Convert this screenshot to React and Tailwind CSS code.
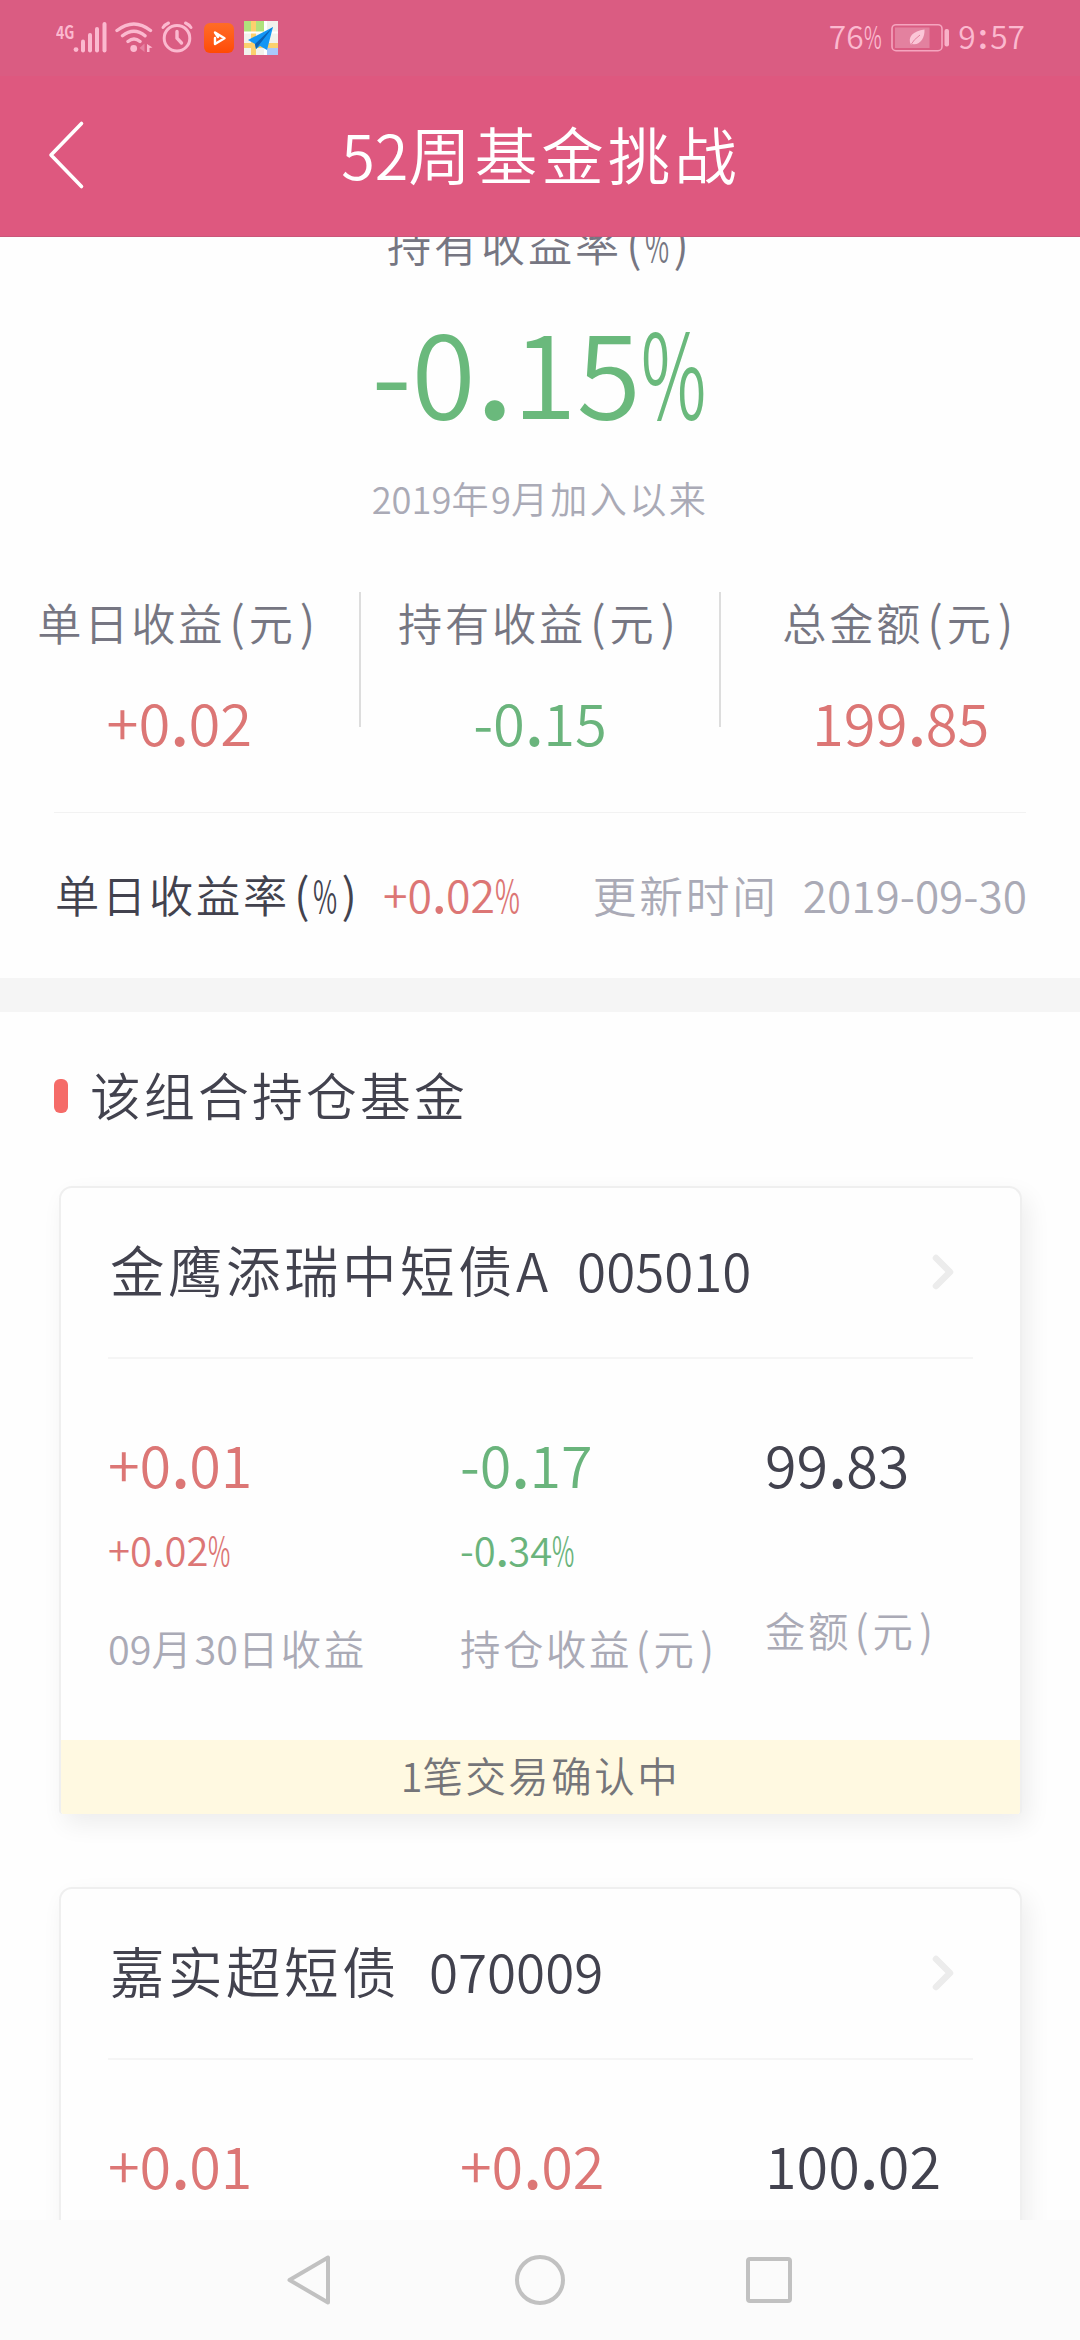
import React from 'react';

const RUN = /[\u4e00-\u9fff]+|[()]|%|\.|:|[^\u4e00-\u9fff()%.:]+/g;

function T({ children, className = '' }) {
  return (
    <div className={`whitespace-nowrap ${className}`}>
      {children.match(RUN).map((run, i) => {
        if (/[\u4e00-\u9fff]/.test(run))
          return <span key={i} className="text-[0.94em] leading-none tracking-[0.0638em]">{run}</span>;
        if (run === '%')
          return (
            <span key={i} className="inline-block w-[0.51em] leading-none">
              <span className="inline-block origin-left scale-x-[0.61] text-[0.92em] leading-none">%</span>
            </span>
          );
        if (run === '(' || run === ')')
          return <span key={i} className="inline-block w-[0.5em] text-center leading-none">{run}</span>;
        if (run === '.')
          return <span key={i} className="inline-block w-[0.29em] text-center font-medium leading-none">.</span>;
        if (run === ':')
          return <span key={i} className="inline-block w-[0.42em] text-center leading-none">:</span>;
        return <span key={i} className="text-[0.92em] font-[350] leading-none">{run}</span>;
      })}
    </div>
  );
}

function StatusBar() {
  return (
    <div className="flex h-[76px] items-start justify-between bg-[#da5c82] pl-[56px] pr-[55px] text-[#fbb9cf]">
      <div className="flex items-start">
        <div className="w-[17px] pt-[20px]">
          <span className="inline-block origin-left scale-x-[0.78] text-[18px] font-bold leading-[18px]">4G</span>
        </div>
        <svg className="mt-[20px] h-[34px] w-[36px]" viewBox="73 20 36 34" fill="currentColor">
          <circle cx="76" cy="49.6" r="2.4" />
          <rect x="81" y="39.5" width="4" height="13" rx="2" />
          <rect x="88" y="33" width="4" height="19.5" rx="2" />
          <rect x="95" y="27" width="4" height="25.5" rx="2" />
          <rect x="102.5" y="22" width="4" height="30.5" rx="2" />
        </svg>
        <svg className="ml-[5px] mt-[20px] h-[34px] w-[40px]" viewBox="114 20 40 34" fill="none" stroke="currentColor" strokeWidth="3.4" strokeLinecap="round">
          <path d="M117 30.500Q134 17.500 150.500 30.500M122.500 35.800Q134 26.500 145 35.800M128 41.500Q134 36.500 140 41.500" />
          <circle cx="133.7" cy="48.5" r="3.4" fill="currentColor" stroke="none" />
          <path d="M147 44L152.500 47.500L149.500 48V52H147Z" fill="currentColor" stroke="none" />
          <path d="M144.500 43.500V52L139.500 48Z" fill="currentColor" stroke="none" opacity=".4" />
        </svg>
        <svg className="ml-[6px] mt-[20px] h-[34px] w-[34px]" viewBox="160 20 34 34" fill="none" stroke="currentColor" strokeWidth="3" strokeLinecap="round" strokeLinejoin="round">
          <circle cx="177" cy="38.2" r="12.8" />
          <path d="M177 31.500V38.200L181.500 43" strokeWidth="3.4" />
          <path d="M163 27.500Q165 24.500 168.500 23M191 27.500Q189 24.500 185.500 23" />
        </svg>
        <div className="ml-[10px] mt-[23px] flex h-[30px] w-[30px] items-center justify-center rounded-[6px] bg-linear-to-b from-[#ff6c25] to-[#ff4a04]">
          <svg className="h-[18px] w-[18px]" viewBox="0 0 18 18" fill="none" stroke="#fff" strokeWidth="2.4" strokeLinecap="round" strokeLinejoin="round">
            <path d="M5 9V15L14.500 9.300L5 3.500L8 8" />
          </svg>
        </div>
        <svg className="ml-[10px] mt-[21px] h-[34px] w-[34px]" viewBox="0 0 34 34">
          <rect width="34" height="34" fill="#f2f1ec" />
          <rect width="20" height="11" fill="#b0e27c" />
          <rect x="7" width="5" height="34" fill="#fbd06e" />
          <rect y="22" width="34" height="5" fill="#fbd06e" />
          <rect y="10.5" width="34" height="2" fill="#fff" />
          <rect x="20" width="3" height="34" fill="#fff" />
          <rect x="23" y="27" width="11" height="7" fill="#a9c8fb" />
          <path d="M4 19L29 6L23 29L16 25L12 28L11 23Z" fill="#1296f5" />
          <path d="M29 6L11 23L12 28L15 24Z" fill="#0c62b4" />
        </svg>
      </div>
      <div className="flex items-start">
        <T className="mt-[17px] text-[34.500px] font-[350] leading-[35px]">76%</T>
        <svg className="ml-[9px] mt-[23px] h-[30px] w-[60px]" viewBox="890 23 60 30" fill="none">
          <rect x="892" y="24.7" width="50" height="26" rx="4" stroke="#f5a5bf" strokeWidth="1.6" />
          <rect x="895" y="27.5" width="34.5" height="20.5" fill="#e3819f" />
          <rect x="944.5" y="29" width="4.5" height="17.5" rx="2" fill="#f9b1c8" />
          <path d="M911 45C907 37 913 31 924.500 29.500C925 38 920 45.500 912.500 44Z" fill="#fbc6d7" />
          <path d="M910 46Q914 39 920 35" stroke="#e3819f" strokeWidth="1" />
        </svg>
        <T className="ml-[8px] mt-[17px] text-[34.500px] font-medium leading-[35px]">9:57</T>
      </div>
    </div>
  );
}

function Header() {
  return (
    <div className="grid h-[161px] grid-cols-[110px_1fr_110px] items-center border-b border-[#c9577a] bg-[#de587f] text-white">
      <svg className="ml-[46px] h-[72px] w-[42px]" viewBox="46 120 42 72" fill="none" stroke="currentColor" strokeWidth="3.6" strokeLinecap="round" strokeLinejoin="round">
        <path d="M81.500 123.500L51 155L81.500 186.500" />
      </svg>
      <T className="pb-[9px] pl-[2px] text-center text-[66.500px] font-[350] leading-[67px]">52周基金挑战</T>
    </div>
  );
}

const RED = 'text-[#dc7675]';
const GREEN = 'text-[#6ab47c]';
const DARK = 'text-[#42424e]';

function Stat({ label, value, tone }) {
  return (
    <div className="flex flex-1 flex-col items-center pt-[5px] font-[350]">
      <T className="mr-[2px] h-[47px] text-[47px] leading-[47px] text-[#767682]">{label}</T>
      <T className={`mt-[43px] h-[62px] text-[63px] leading-[62px] ${tone}`}>{value}</T>
    </div>
  );
}

function Figure({ value, tone, pct, label }) {
  return (
    <div className="font-[350]">
      <T className={`h-[62px] text-[62.500px] leading-[62px] ${tone}`}>{value}</T>
      {pct && <T className={`mt-[34px] h-[42px] text-[43.500px] leading-[42px] ${tone}`}>{pct}</T>}
      {label && (
        <T className={`h-[43px] text-[43px] leading-[43px] text-[#aaaab6] ${pct ? 'mt-[57px]' : 'mt-[115px]'}`}>{label}</T>
      )}
    </div>
  );
}

function FundCard({ name, code, figures, notice }) {
  return (
    <div className="ml-[59px] mr-[58px] h-[628px] shrink-0 overflow-hidden rounded-t-[13px] rounded-b-[4px] border-2 border-b-0 border-[#efefef] bg-[#fefefe] shadow-[6px_10px_24px_rgba(0,0,0,0.07)]">
      <div className={`flex h-[108px] pl-[49px] pt-[50px] font-[350] ${DARK}`}>
        <T className="text-[58px] leading-[58px]">{name}</T>
        <T className="ml-[29px] text-[57.500px] leading-[58px]">{code}</T>
        <svg className="ml-auto mr-[63px] mt-[14px] h-[40px] w-[26px]" viewBox="0 0 26 40" fill="none" stroke="#ececec" strokeWidth="6.5" strokeLinecap="round" strokeLinejoin="round">
          <path d="M5 6L19 20L5 34" />
        </svg>
      </div>
      <div className="mx-[47px] mt-[61px] h-[2px] bg-[#f5f5f5]" />
      <div className="grid h-[381px] grid-cols-[352px_305px_1fr] pl-[47px] pt-[71px]">
        {figures.map((f, i) => (
          <Figure key={i} {...f} />
        ))}
      </div>
      {notice && (
        <div className="flex h-[74px] items-center justify-center bg-[#fff9e1] pb-[6px]">
          <T className="text-[43px] font-[350] leading-[43px] text-[#757579]">{notice}</T>
        </div>
      )}
    </div>
  );
}

function NavBar() {
  return (
    <div className="flex h-[120px] shrink-0 items-center bg-[#fbfbfb] text-[#c1c1c1]">
      <svg className="ml-[286px] h-[52px] w-[46px]" viewBox="286 2254 46 52" fill="none" stroke="currentColor" strokeWidth="4" strokeLinejoin="round">
        <path d="M289.500 2280L328 2257.500V2302.500Z" />
      </svg>
      <div className="ml-[183px] h-[50px] w-[50px] rounded-full border-4 border-current" />
      <div className="ml-[181px] h-[46px] w-[46px] rounded-[4px] border-4 border-current" />
    </div>
  );
}

export default function App() {
  return (
    <div className="flex h-[2340px] w-[1080px] flex-col overflow-hidden bg-[#fefefe] font-['Noto_Sans_CJK_SC',sans-serif]">
      <StatusBar />
      <Header />
      <main className="flex min-h-0 flex-1 flex-col overflow-hidden">
        <T className="-mt-[19px] h-[47px] shrink-0 text-center text-[47px] font-[350] leading-[47px] text-[#767682]">持有收益率(%)</T>
        <T className="mt-[35px] h-[128px] shrink-0 pr-[3px] text-center text-[127px] font-[350] leading-[128px] text-[#6ab97c]">-0.15%</T>
        <T className="mt-[49px] h-[39px] shrink-0 text-center text-[39.500px] font-[350] leading-[39px] text-[#aaaab6]">2019年9月加入以来</T>
        <div className="mt-[76px] flex h-[135px] shrink-0">
          <Stat label="单日收益(元)" value="+0.02" tone={RED} />
          <div className="w-[2px] bg-[#dddddd]" />
          <Stat label="持有收益(元)" value="-0.15" tone={GREEN} />
          <div className="w-[2px] bg-[#dddddd]" />
          <Stat label="总金额(元)" value="199.85" tone={RED} />
        </div>
        <div className="mx-[54px] mt-[85px] h-px shrink-0 bg-[#f2f2f2]" />
        <div className="mt-[55px] flex h-[47px] shrink-0 items-baseline pl-[55px] pr-[53px] text-[47px] font-[350] leading-[47px]">
          <T className={DARK}>单日收益率(%)</T>
          <T className={`ml-[22px] text-[48.500px] ${RED}`}>+0.02%</T>
          <T className="ml-auto text-[46.500px] text-[#aaaab6]">更新时间</T>
          <T className="ml-[24px] text-[48px] text-[#aaaab6]">2019-09-30</T>
        </div>
        <div className="mt-[63px] h-[34px] shrink-0 bg-[#f5f5f5]" />
        <div className="mt-[54px] flex h-[54px] shrink-0">
          <div className="ml-[54px] mt-[13px] h-[34px] w-[14px] rounded-[6px] bg-[#f56b68]" />
          <T className={`ml-[22px] text-[54px] font-[350] leading-[54px] ${DARK}`}>该组合持仓基金</T>
        </div>
        <div className="mt-[66px] flex flex-col gap-[73px]">
          <FundCard
            name="金鹰添瑞中短债A"
            code="005010"
            notice="1笔交易确认中"
            figures={[
              { value: '+0.01', pct: '+0.02%', label: '09月30日收益', tone: RED },
              { value: '-0.17', pct: '-0.34%', label: '持仓收益(元)', tone: GREEN },
              { value: '99.83', label: '金额(元)', tone: DARK },
            ]}
          />
          <FundCard
            name="嘉实超短债"
            code="070009"
            figures={[
              { value: '+0.01', tone: RED },
              { value: '+0.02', tone: RED },
              { value: '100.02', tone: DARK },
            ]}
          />
        </div>
      </main>
      <NavBar />
    </div>
  );
}
